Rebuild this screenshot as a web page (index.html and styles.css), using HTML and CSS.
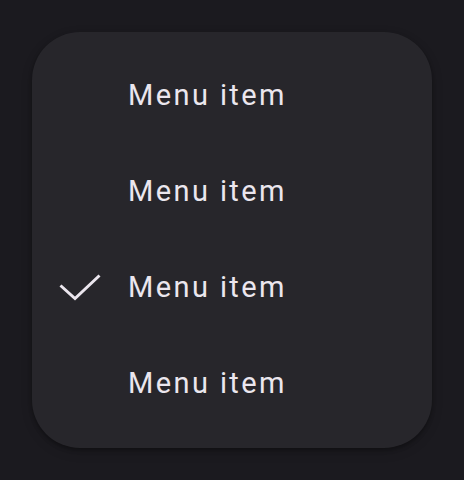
FILE: index.html
```html
<!DOCTYPE html>
<html>
<head>
<meta charset="utf-8">
<link rel="stylesheet" href="styles.css">
</head>
<body>
<div class="page">
  <div class="menu">
    <div class="item"><span class="lead"></span><span class="label">Menu item</span></div>
    <div class="item"><span class="lead"></span><span class="label">Menu item</span></div>
    <div class="item"><span class="lead"><svg viewBox="0 0 48 48" width="48" height="48"><polyline fill="none" stroke="#ebe6ee" stroke-width="3" points="4.5,21.5 19,34.5 43.5,11.5"/></svg></span><span class="label">Menu item</span></div>
    <div class="item"><span class="lead"></span><span class="label">Menu item</span></div>
  </div>
</div>
</body>
</html>
```
FILE: styles.css
```css
html, body {
  margin: 0;
  padding: 0;
  background: #1b1a1f;
}
.page {
  width: 464px;
  height: 480px;
  padding: 32px;
  box-sizing: border-box;
}
.menu {
  width: 400px;
  height: 416px;
  box-sizing: border-box;
  padding: 16px 0;
  background: #27262b;
  border-radius: 48px;
  box-shadow: 0 2px 4px rgba(0,0,0,0.3), 0 4px 12px rgba(0,0,0,0.15);
  display: flex;
  flex-direction: column;
}
.item {
  height: 96px;
  display: flex;
  align-items: center;
  padding: 0 24px;
  gap: 24px;
}
.lead {
  width: 48px;
  height: 48px;
  display: flex;
}
.label {
  font-family: Roboto, "Noto Sans", sans-serif;
  font-size: 29px;
  line-height: 40px;
  letter-spacing: 2.4px;
  margin-bottom: 2px;
  color: #ebe6ee;
}
```
